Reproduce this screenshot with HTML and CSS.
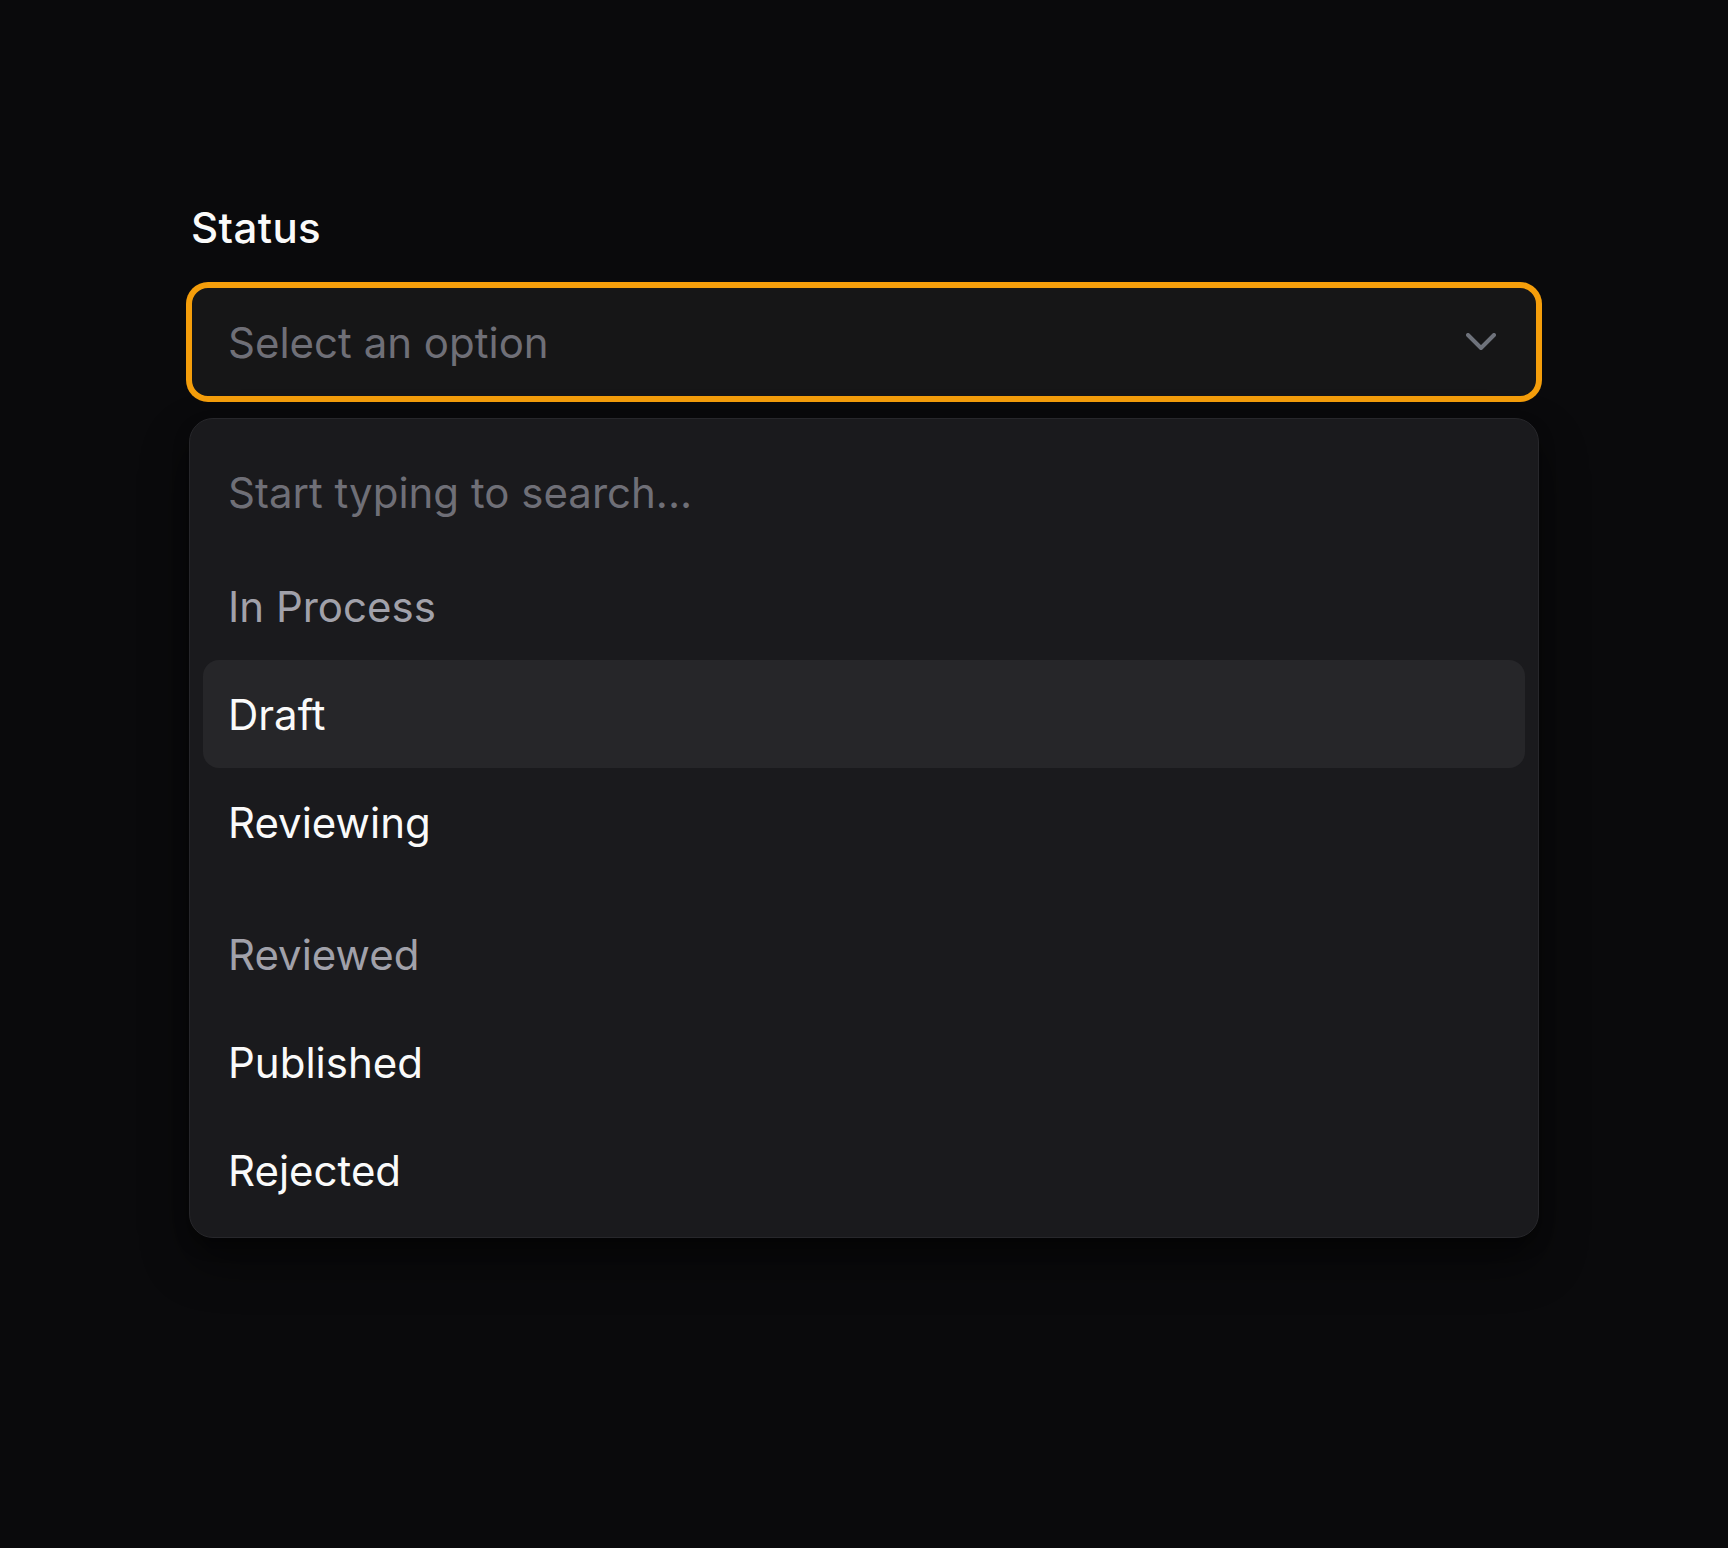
FILE: index.html
```html
<!DOCTYPE html>
<html lang="en">
<head>
<meta charset="utf-8">
<title>Status select</title>
<link rel="stylesheet" href="styles.css">
</head>
<body>
<main class="page">
  <div class="field">
    <label class="field-label">Status</label>
    <div class="select">
      <span class="select-placeholder">Select an option</span>
      <svg class="chevron" width="30" height="19" viewBox="0 0 30 19" aria-hidden="true">
        <path d="M2 2 L15 15 L28 2" fill="none" stroke="currentColor" stroke-width="4" stroke-linecap="round" stroke-linejoin="round"/>
      </svg>
    </div>
    <div class="menu">
      <div class="menu-search">Start typing to search...</div>
      <div class="menu-group">
        <div class="menu-group-title">In Process</div>
        <div class="menu-item is-active">Draft</div>
        <div class="menu-item">Reviewing</div>
      </div>
      <div class="menu-group menu-group-spaced">
        <div class="menu-group-title">Reviewed</div>
        <div class="menu-item">Published</div>
        <div class="menu-item">Rejected</div>
      </div>
    </div>
  </div>
</main>
</body>
</html>
```

FILE: styles.css
```css
* {
  box-sizing: border-box;
}

html, body {
  margin: 0;
  padding: 0;
  background: #0a0a0c;
}

body {
  font-family: Inter, "Noto Sans", "Liberation Sans", sans-serif;
  color: #fafafa;
  min-height: 1548px;
}

.page {
  padding-top: 198px;
  display: flex;
  justify-content: center;
}

.field {
  width: 1350px;
  display: flex;
  flex-direction: column;
}

.field-label {
  font-size: 42px;
  line-height: 60px;
  font-weight: 500;
  letter-spacing: 0.4px;
  color: #fafafa;
  padding-left: 2px;
  margin-bottom: 27px;
}

.select {
  height: 114px;
  border: 3px solid #f59e0b;
  box-shadow: 0 0 0 3px #f59e0b;
  border-radius: 19px;
  background: #161617;
  display: flex;
  align-items: center;
  justify-content: space-between;
  padding: 0 40px 0 36px;
}

.select-placeholder {
  font-size: 42px;
  color: #6f6f77;
}

.chevron {
  color: #6e727b;
  display: block;
  flex: none;
}

.menu {
  margin-top: 19px;
  background: #1a1a1d;
  border: 1px solid #27272b;
  border-radius: 24px;
  padding: 13px;
  box-shadow: 0 24px 48px rgba(0, 0, 0, 0.45), 0 8px 16px rgba(0, 0, 0, 0.3);
}

.menu-search {
  height: 120px;
  display: flex;
  align-items: center;
  padding-left: 25px;
  font-size: 42px;
  color: #6f6f77;
}

.menu-group-spaced {
  margin-top: 24px;
}

.menu-group-title,
.menu-item {
  height: 108px;
  display: flex;
  align-items: center;
  padding-left: 25px;
  font-size: 42px;
  border-radius: 16px;
}

.menu-group-title {
  color: #a1a1aa;
}

.menu-item {
  color: #fafafa;
}

.menu-item.is-active {
  background: #262629;
}
```
